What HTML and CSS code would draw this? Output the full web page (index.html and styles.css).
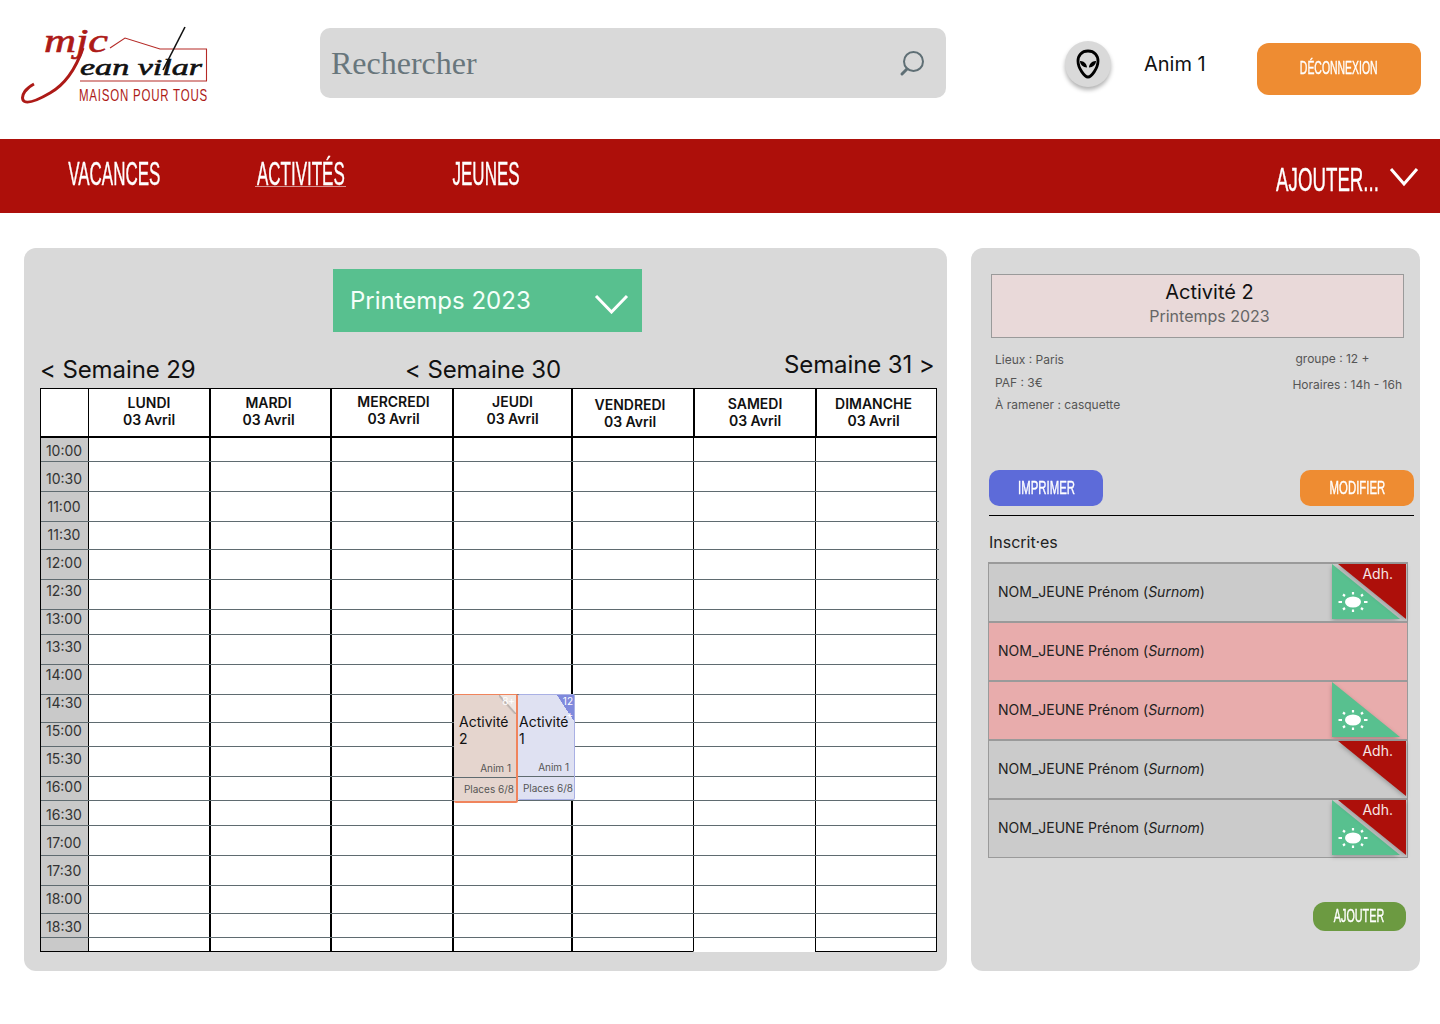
FILE: index.html
```html
<!DOCTYPE html>
<html lang="fr">

<head>
    <meta charset="UTF-8">
    <meta name="viewport" content="width=device-width, initial-scale=1.0">
    <title>MJC Jean Vilar - Activités</title>
    <link rel="stylesheet" href="styles.css">
</head>

<body>

    <svg class="defs" width="0" height="0">
        <symbol id="sun-corner" viewBox="0 0 72 60">
            <polygon points="0,1 68,56 0,56" fill="#58c08f" />
            <ellipse cx="21" cy="39" rx="8" ry="5.5" fill="#fff" />
            <path d="M21 29v2.5M21 46.5v2.500M6.500 39h3.500M32 39h3.500M11 31.500l2 1.500M31 31.500l-2 1.500M11 46.500l2-1.500M31 46.500l-2-1.500" stroke="#fff" stroke-width="2.200" />
        </symbol>
        <symbol id="adh-corner" viewBox="0 0 72 60">
            <polygon points="1,1 69,1 69,56" fill="#ad0f0a" />
        </symbol>
    </svg>

    <header class="topbar">
        <svg class="logo" viewBox="20 20 190 90" width="190" height="90">
            <path d="M110 48 L125 38 L160 49 L206.500 49 L206.500 81 L80 81" fill="none" stroke="#b52a26" stroke-width="1.100" />
            <text x="44" y="52" class="logo-mjc" textLength="64" lengthAdjust="spacingAndGlyphs">mjc</text>
            <path d="M83 48 C76 68 66 84 50 93 C38 100 26 105 23 100 C21 95 26 88 34 84" fill="none" stroke="#ad1a17" stroke-width="3" />
            <text x="80" y="75" class="logo-name" textLength="122" lengthAdjust="spacingAndGlyphs">ean vilar</text>
            <path d="M185 27 L163 70" fill="none" stroke="#111" stroke-width="1.600" />
            <text transform="translate(79 101) scale(0.72 1)" class="logo-sub" textLength="178" lengthAdjust="spacing">MAISON POUR TOUS</text>
        </svg>

        <div class="search">
            <span>Rechercher</span>
            <svg width="28" height="28" viewBox="0 0 28 28">
                <circle cx="15.500" cy="12.500" r="9.500" fill="none" stroke="#5f6f75" stroke-width="2" />
                <path d="M9 20 L4 25" stroke="#5f6f75" stroke-width="3" stroke-linecap="round" />
            </svg>
        </div>

        <div class="avatar">
            <svg width="26" height="30" viewBox="0 0 26 30">
                <path d="M13 2 C6.500 2 3 6.500 3 12 C3 19 9.500 28 13 28 C16.500 28 23 19 23 12 C23 6.500 19.500 2 13 2 Z" fill="none" stroke="#000" stroke-width="2.800" />
                <path d="M5 12 C8 11.500 12 14.500 12 18.500 C8 18.500 5 15.500 5 12 Z M21 12 C18 11.500 14 14.500 14 18.500 C18 18.500 21 15.500 21 12 Z" fill="#000" />
            </svg>
        </div>
        <div class="user-name">Anim 1</div>
        <a class="btn btn-logout"><span class="hand">DÉCONNEXION</span></a>
    </header>

    <nav class="navbar">
        <a class="nav-item nav-vacances"><span class="hand">VACANCES</span></a>
        <a class="nav-item nav-activites active"><span class="hand">ACTIVITÉS</span></a>
        <a class="nav-item nav-jeunes"><span class="hand">JEUNES</span></a>
        <a class="nav-item nav-add"><span class="hand">AJOUTER...</span></a>
        <svg class="nav-chevron" width="30" height="20" viewBox="0 0 30 20">
            <path d="M2 2 L15 17 L28 2" fill="none" stroke="#fff" stroke-width="3" />
        </svg>
    </nav>

    <main class="content">
        <section class="panel planning">
            <div class="period">
                <span>Printemps 2023</span>
                <svg width="35" height="20" viewBox="0 0 35 20">
                    <path d="M2 2 L17.500 18 L33 2" fill="none" stroke="#fff" stroke-width="3" />
                </svg>
            </div>

            <div class="weeks">
                <span class="week week-prev">&lt; Semaine 29</span>
                <span class="week week-current">&lt; Semaine 30</span>
                <span class="week week-next">Semaine 31 &gt;</span>
            </div>

            <div class="calendar">
                <div class="days">
                    <div class="day"></div>
                    <div class="day first">LUNDI<br>03 Avril</div>
                    <div class="day tue">MARDI<br>03 Avril</div>
                    <div class="day up wed">MERCREDI<br>03 Avril</div>
                    <div class="day up">JEUDI<br>03 Avril</div>
                    <div class="day down fri">VENDREDI<br>03 Avril</div>
                    <div class="day low">SAMEDI<br>03 Avril</div>
                    <div class="day low sun">DIMANCHE<br>03 Avril</div>
                </div>

                <div class="slots">
                    <div class="columns">
                        <div class="col col-hours"></div>
                        <div class="col thin"></div>
                        <div class="col"></div>
                        <div class="col"></div>
                        <div class="col"></div>
                        <div class="col"></div>
                        <div class="col thin col-sat"></div>
                        <div class="col thin"></div>
                    </div>

                    <div class="lines">
                        <div class="line h24"></div>
                        <div class="line h30"></div>
                        <div class="line h30 tick"></div>
                        <div class="line h28 tick"></div>
                        <div class="line h30 tick"></div>
                        <div class="line h30"></div>
                        <div class="line h25"></div>
                        <div class="line h30"></div>
                        <div class="line h30"></div>
                        <div class="line h28"></div>
                        <div class="line h24"></div>
                        <div class="line h30"></div>
                        <div class="line h24"></div>
                        <div class="line h25"></div>
                        <div class="line h30"></div>
                        <div class="line h30"></div>
                        <div class="line h28"></div>
                        <div class="line h24"></div>
                    </div>

                    <div class="hours">
                        <span>10:00</span><span>10:30</span><span>11:00</span><span>11:30</span>
                        <span>12:00</span><span>12:30</span><span>13:00</span><span>13:30</span>
                        <span>14:00</span><span>14:30</span><span>15:00</span><span>15:30</span>
                        <span>16:00</span><span>16:30</span><span>17:00</span><span>17:30</span>
                        <span>18:00</span><span>18:30</span>
                    </div>

                    <div class="events">
                        <div class="event event-selected">
                            <span class="event-age">8+</span>
                            <div class="event-title">Activité 2</div>
                            <div class="event-anim">Anim 1</div>
                            <div class="event-places">Places 6/8</div>
                        </div>
                        <div class="event event-blue">
                            <span class="event-age">12<br>+</span>
                            <div class="event-title">Activité 1</div>
                            <div class="event-anim">Anim 1</div>
                            <div class="event-places">Places 6/8</div>
                        </div>
                    </div>
                </div>
            </div>
        </section>

        <aside class="panel details">
            <div class="title-box">
                <h2>Activité 2</h2>
                <p>Printemps 2023</p>
            </div>

            <div class="infos">
                <div class="infos-left">
                    <p>Lieux : Paris</p>
                    <p>PAF : 3€</p>
                    <p>À ramener : casquette</p>
                </div>
                <div class="infos-right">
                    <p class="info-group">groupe : 12 +</p>
                    <p>Horaires : 14h - 16h</p>
                </div>
            </div>

            <div class="actions">
                <a class="btn btn-print"><span class="hand">IMPRIMER</span></a>
                <a class="btn btn-edit"><span class="hand">MODIFIER</span></a>
            </div>

            <h3 class="list-title">Inscrit·es</h3>

            <div class="members">
                <div class="member">
                    <span>NOM_JEUNE Prénom (<em>Surnom</em>)</span>
                    <svg class="corner"><use href="#sun-corner" /></svg>
                    <svg class="corner corner-adh"><use href="#adh-corner" /></svg>
                    <span class="adh">Adh.</span>
                </div>
                <div class="member member-alert">
                    <span>NOM_JEUNE Prénom (<em>Surnom</em>)</span>
                </div>
                <div class="member member-alert">
                    <span>NOM_JEUNE Prénom (<em>Surnom</em>)</span>
                    <svg class="corner"><use href="#sun-corner" /></svg>
                </div>
                <div class="member">
                    <span>NOM_JEUNE Prénom (<em>Surnom</em>)</span>
                    <svg class="corner corner-adh"><use href="#adh-corner" /></svg>
                    <span class="adh">Adh.</span>
                </div>
                <div class="member">
                    <span>NOM_JEUNE Prénom (<em>Surnom</em>)</span>
                    <svg class="corner"><use href="#sun-corner" /></svg>
                    <svg class="corner corner-adh"><use href="#adh-corner" /></svg>
                    <span class="adh">Adh.</span>
                </div>
            </div>

            <a class="btn btn-add"><span class="hand">AJOUTER</span></a>
        </aside>
    </main>

</body>

</html>
```

FILE: styles.css
```css
* {
    box-sizing: border-box;
}

body {
    margin: 0;
    font-family: Inter, "Liberation Sans", sans-serif;
    color: #111;
    background-color: #fff;
}

p,
h2,
h3 {
    margin: 0;
    font-weight: 400;
}

.defs {
    display: block;
    height: 0;
}

/* marker lettering of the titles and buttons */
.hand {
    display: inline-block;
    font-family: "Liberation Sans Narrow", "Liberation Sans", sans-serif;
    color: #fff;
    white-space: nowrap;
    -webkit-text-stroke: 0.4px #fff;
    transform: scaleX(0.6);
}

.btn {
    display: flex;
    justify-content: center;
    align-items: center;
    overflow: hidden;
}

/* top bar */
.topbar {
    height: 139px;
    display: flex;
    align-items: flex-start;
}

.logo {
    margin: 20px 0 0 20px;
    flex: none;
}

.logo-mjc {
    font: italic 400 34px "Liberation Serif", serif;
    fill: #ad1a17;
    stroke: #ad1a17;
    stroke-width: 0.6px;
}

.logo-name {
    font: italic 400 24px "Liberation Serif", serif;
    fill: #111;
    stroke: #111;
    stroke-width: 0.6px;
}

.logo-sub {
    font: 400 16px "Liberation Sans Narrow", "Liberation Sans", sans-serif;
    fill: #ad1a17;
}

.search {
    width: 626px;
    height: 70px;
    margin: 28px 0 0 110px;
    padding: 0 20px 0 11px;
    display: flex;
    justify-content: space-between;
    align-items: center;
    border-radius: 10px;
    background-color: #d9d9d9;
    font: 32px "Liberation Serif", serif;
    color: #68767c;
}

.avatar {
    width: 46px;
    height: 46px;
    margin: 41px 0 0 119px;
    display: flex;
    justify-content: center;
    align-items: center;
    border-radius: 50%;
    background-color: #d9d9d9;
    box-shadow: 0 3px 4px rgba(0, 0, 0, 0.3);
}

.user-name {
    width: 113px;
    margin: 51px 0 0 33px;
    font-size: 20px;
    line-height: 26px;
}

.btn-logout {
    width: 164px;
    height: 52px;
    margin-top: 43px;
    padding-bottom: 2px;
    border-radius: 12px;
    background-color: #ee8c32;
    font-size: 19px;
}

.btn-logout .hand {
    transform: scaleX(0.55);
}

/* navigation */
.navbar {
    height: 74px;
    display: flex;
    align-items: flex-start;
    background-color: #ad0f0a;
}

.nav-item {
    height: 47px;
    display: flex;
    justify-content: center;
    align-items: flex-end;
    font-size: 34px;
    line-height: 26px;
}

.nav-item .hand {
    transform: scaleX(0.5);
}

.nav-vacances {
    width: 92px;
    margin: 0 0 0 68px;
}

.nav-activites {
    width: 91px;
    margin-left: 95px;
}

.active {
    height: 48px;
    border-bottom: 1px solid rgba(255, 255, 255, 0.55);
}

.nav-jeunes {
    width: 69px;
    margin-left: 106px;
}

.nav-add {
    width: 105px;
    height: 57px;
    margin-left: 754px;
    line-height: 34px;
}

.nav-item.nav-add .hand {
    transform: scaleX(0.55);
}

.nav-chevron {
    margin: 28px 0 0 9px;
}

/* content */
.content {
    padding: 35px 20px 0 24px;
    display: flex;
    gap: 24px;
}

.panel {
    height: 723px;
    border-radius: 12px;
    background-color: #d9d9d9;
}

.planning {
    width: 923px;
    padding: 21px 0 0 16px;
}

.period {
    width: 309px;
    height: 63px;
    margin-left: 293px;
    padding: 0 13px 0 17px;
    display: flex;
    justify-content: space-between;
    align-items: center;
    background-color: #58c08f;
    color: #f4fff9;
    font-size: 24px;
}

.period svg {
    margin-top: 6px;
}

.weeks {
    height: 56px;
    padding-bottom: 3px;
    display: flex;
    align-items: flex-end;
    font-size: 24px;
    line-height: 30px;
    letter-spacing: -0.1px;
}

.week-prev {
    width: 365px;
}

.week-current {
    width: 379px;
}

.week-next {
    padding-bottom: 5px;
}

/* calendar */
.calendar {
    width: 897px;
    border: solid #000;
    border-width: 1px 1px 0 1px;
    background-color: #fff;
}

.days,
.columns {
    display: grid;
    grid-template-columns: 47px 121px 121px 122px 119px 122px 122px 121px;
}

.days {
    height: 49px;
    border-bottom: 2px solid #000;
}

.day {
    padding-top: 5px;
    border-left: 2px solid #000;
    font-size: 14px;
    font-weight: 600;
    line-height: 17px;
    text-align: center;
}

.day:first-child {
    border-left: none;
}

.day.first {
    border-left-width: 1px;
}

.day.up {
    padding-top: 4px;
}

.day.down {
    padding-top: 7px;
}

.day.low {
    padding-top: 6px;
}

.day.tue {
    padding-right: 4px;
}

.day.wed {
    padding-left: 3px;
}

.day.fri {
    padding-right: 6px;
}

.day.sun {
    padding-right: 6px;
}

.slots {
    position: relative;
    display: grid;
}

.columns,
.lines,
.hours {
    grid-area: 1 / 1;
}

.columns {
    height: 514px;
}

.col {
    border-left: 2px solid #000;
    border-bottom: 1px solid #000;
}

.col.thin {
    border-left-width: 1px;
}

.col-hours {
    border-left: none;
    background-color: #c9c9c9;
}

.col-sat {
    border-bottom-color: transparent;
}

.line {
    position: relative;
    border-bottom: 1px solid #5f6b70;
}

.tick::after {
    content: "";
    position: absolute;
    left: 100%;
    bottom: -1px;
    width: 3px;
    height: 1px;
    background-color: #5f6b70;
}

.h24 {
    height: 24px;
}

.h25 {
    height: 25px;
}

.h28 {
    height: 28px;
}

.h30 {
    height: 30px;
}

.hours {
    width: 46px;
    margin-top: -1px;
    display: flex;
    flex-direction: column;
    font-size: 14px;
    color: #333;
    text-align: center;
}

.hours span {
    height: 28px;
    line-height: 28px;
}

/* events lying over the grid */
.events {
    position: absolute;
    top: 256px;
    left: 413px;
    display: flex;
    align-items: flex-start;
}

.event {
    position: relative;
    display: flex;
    flex-direction: column;
    border-radius: 2px;
}

.event-selected {
    width: 64px;
    height: 109px;
    background-color: #e5d5ce;
    border: solid #f0845c;
    border-width: 1px 2px 2px 0;
}

.event-blue {
    width: 57px;
    height: 106px;
    background-color: #dfe1f2;
    border: 1px solid #a9b0e4;
    border-left: none;
}

.event-age {
    position: absolute;
    top: 0;
    right: 0;
    width: 17px;
    padding-right: 1px;
    font-size: 10px;
    line-height: 13px;
    color: #fff;
    text-align: right;
}

.event-selected .event-age {
    height: 19px;
    background: linear-gradient(to bottom left, #efe7e3 45%, #b5aca8 50%, transparent 58%);
}

.event-blue .event-age {
    height: 26px;
    background: linear-gradient(to bottom left, #7f89dc 50%, transparent 50.500%);
}

.event-title {
    height: 54px;
    margin-top: 18px;
    padding-left: 5px;
    font-size: 14px;
    line-height: 17px;
    color: #111;
}

.event-blue .event-title {
    margin-bottom: 1px;
    padding-left: 1px;
}

.event-anim {
    height: 8px;
    margin-top: -4px;
    padding-right: 5px;
    font-size: 10px;
    line-height: 12px;
    color: #555;
    text-align: right;
}

.event-places {
    height: 24px;
    margin-top: 7px;
    border-top: 1px solid #5f6b70;
    padding-right: 1px;
    font-size: 10px;
    line-height: 22px;
    color: #555;
    text-align: right;
}

.event-selected .event-places {
    padding-right: 2px;
}

/* details panel */
.details {
    width: 449px;
    padding: 26px 6px 0 18px;
}

.title-box {
    width: 413px;
    height: 64px;
    margin-left: 2px;
    padding: 5px 0 0 24px;
    border: 1px solid #9a9a9a;
    background-color: #e9d9d9;
    text-align: center;
}

.title-box h2 {
    font-size: 20px;
    line-height: 25px;
    color: #111;
}

.title-box p {
    font-size: 16px;
    line-height: 22px;
    color: #666;
}

.infos {
    height: 132px;
    padding: 11px 12px 0 6px;
    display: flex;
    justify-content: space-between;
    font-size: 12px;
    color: #555;
}

.infos-left p {
    line-height: 22.500px;
}

.infos-right {
    margin-top: -3px;
}

.infos-right p {
    line-height: 26px;
}

.info-group {
    margin-left: 3px;
}

.actions {
    height: 46px;
    padding-bottom: 9px;
    display: flex;
    justify-content: space-between;
    border-bottom: 1px solid #000;
}

.btn-print,
.btn-edit {
    width: 114px;
    height: 36px;
    border-radius: 10px;
    font-size: 19px;
}

.btn-print {
    background-color: #5d6bd9;
}

.btn-edit {
    background-color: #ee8c32;
}

.list-title {
    margin-top: 16px;
    font-size: 16px;
    line-height: 20px;
    color: #222;
}

.members {
    width: 420px;
    margin: 10px 0 0 -1px;
    border: solid #9a9a9a;
    border-width: 0 1px 1px 1px;
}

.member {
    position: relative;
    height: 59px;
    padding: 0 0 2px 9px;
    display: flex;
    align-items: center;
    border-top: 2px solid #9a9a9a;
    background-color: #cbcbcb;
    font-size: 14px;
    color: #222;
}

.member-alert {
    background-color: #e8acac;
}

.corner {
    position: absolute;
    top: -1px;
    left: 343px;
    width: 72px;
    height: 60px;
    filter: drop-shadow(0 2px 2px rgba(0, 0, 0, 0.25));
}

.corner-adh {
    left: 348px;
}

.adh {
    position: absolute;
    top: 1px;
    right: 14px;
    font-size: 14px;
    line-height: 17px;
    color: #f6e6e6;
}

.btn-add {
    width: 93px;
    height: 29px;
    margin: 44px 0 0 324px;
    border-radius: 12px;
    background-color: #6c9a41;
    font-size: 18px;
}
```
